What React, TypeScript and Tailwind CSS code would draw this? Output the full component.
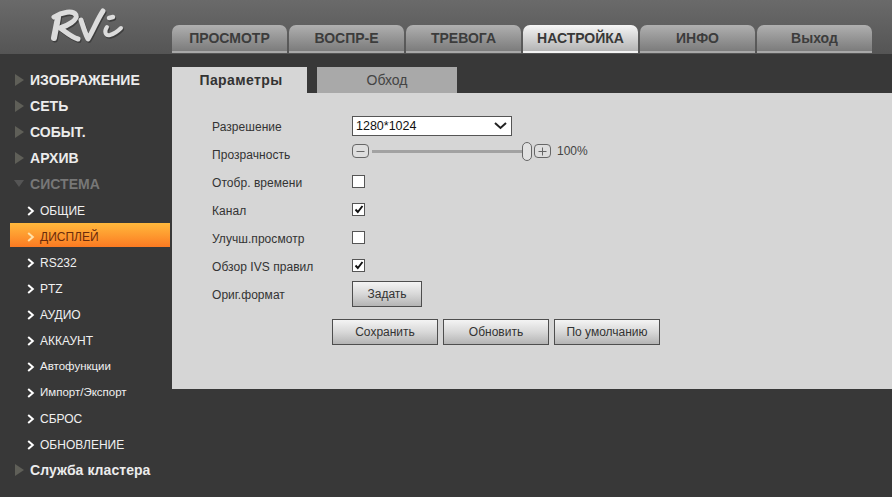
import React from "react";

const tabs = [
  { t: "ПРОСМОТР", w: "w-[115px]" },
  { t: "ВОСПР-Е", w: "w-[115px]" },
  { t: "ТРЕВОГА", w: "w-[115px]" },
  { t: "НАСТРОЙКА", w: "w-[115px]", active: true },
  { t: "ИНФО", w: "w-[115px]" },
  { t: "Выход", w: "w-[115px]" },
];

function Tri({ down = false }: { down?: boolean }) {
  return (
    <svg width="12" height="14" viewBox="0 0 12 14" className="mr-[4px] shrink-0">
      {down ? <path d="M0 3h10L5 10z" fill="#555" /> : <path d="M1 1l9 6-9 6z" fill="#5f5f58" />}
    </svg>
  );
}

function Chev({ color = "#fff" }: { color?: string }) {
  return (
    <svg width="8" height="10" viewBox="0 0 8 10" className="mr-[5px] shrink-0">
      <path d="M1.2 1l4.6 4-4.6 4" fill="none" stroke={color} strokeWidth="2" />
    </svg>
  );
}

function Section({ t, muted = false, down = false }: { t: string; muted?: boolean; down?: boolean }) {
  return (
    <div className={`flex h-[26px] items-center pl-[14px] text-[14px] font-bold tracking-[0.05px] ${muted ? "text-[#777]" : "text-[#ececec]"}`}>
      <Tri down={down} />
      {t}
    </div>
  );
}

function Sub({ t, active = false, small = false }: { t: string; active?: boolean; small?: boolean }) {
  return (
    <div className="h-[26px]">
      <div
        className={`ml-[10px] flex h-[24px] w-[160px] items-center pl-[17px] pt-[4px] ${small ? "text-[11.5px]" : "text-[12px]"} ${
          active ? "bg-gradient-to-b from-[#ffb83c] to-[#fb7a22] text-[#6b2c0c]" : "text-[#f0f0f0]"
        }`}
      >
        <Chev color={active ? "#ffe2a8" : "#fff"} />
        {t}
      </div>
    </div>
  );
}

function Row({ label, children }: { label: string; children: React.ReactNode }) {
  return (
    <div className="flex h-[28px] items-center">
      <div className="w-[140px] text-[12px] tracking-[0.05px] text-[#333]">{label}</div>
      {children}
    </div>
  );
}

function Check({ on = false }: { on?: boolean }) {
  return (
    <div className="-mt-[3px] flex h-[13px] w-[13px] items-center justify-center border border-[#555] bg-white">
      {on && (
        <svg width="10" height="9" viewBox="0 0 10 9">
          <path d="M1.5 4.5L3.8 7 8.5 1" fill="none" stroke="#111" strokeWidth="1.9" />
        </svg>
      )}
    </div>
  );
}

function Btn({ t, w }: { t: string; w: string }) {
  return (
    <div
      className={`flex h-[26px] ${w} items-center justify-center border border-[#4e4e4e] bg-gradient-to-b from-[#f4f4f4] via-[#d8d8d8] to-[#b4b4b4] text-[12px] text-[#333]`}
    >
      {t}
    </div>
  );
}

function RoundBtn({ plus = false }: { plus?: boolean }) {
  return (
    <div className="flex h-[14px] w-[17px] items-center justify-center rounded-[4px] border border-[#666] bg-[#dedede]">
      <svg width="9" height="9" viewBox="0 0 9 9">
        <path d={plus ? "M0.5 4.5h8M4.5 0.5v8" : "M0.5 4.5h8"} stroke="#666" strokeWidth="1" />
      </svg>
    </div>
  );
}

function LogoStrokes({ color }: { color: string }) {
  return (
    <g fill="none" stroke={color} strokeLinecap="round" strokeLinejoin="round">
      <path d="M8 9C7 16 5 24 4 30" strokeWidth="6" />
      <path d="M4 9C12 4 23 2 26 7C28 12 17 18 10 20C16 24 21 29 28 31" strokeWidth="5" />
      <path d="M31 12C33 18 35 25 38 31C43 23 47 12 53 3" strokeWidth="5" />
      <path d="M57 19C54 23 55 28 60 27C64 26 68 23 71 20" strokeWidth="4" />
      <path d="M59 10L63 9" strokeWidth="4.5" />
    </g>
  );
}

function Logo() {
  return (
    <svg width="76" height="42" viewBox="0 0 76 42" className="ml-[50px] mt-[8px] shrink-0">
      <g transform="translate(1 1.5)">
        <LogoStrokes color="#3e3e3e" />
      </g>
      <LogoStrokes color="#dcdcdc" />
    </svg>
  );
}

export default function App() {
  return (
    <div className="h-[497px] w-[892px] overflow-hidden bg-[#383838] font-['Liberation_Sans',Arial,sans-serif]">
      <header className="flex h-[54px] bg-gradient-to-b from-[#6a6a6a] to-[#555555]">
        <div className="w-[172px] shrink-0">
          <Logo />
        </div>
        <nav className="mt-[25px] flex h-[29px] gap-[2px] self-start">
          {tabs.map((x) => (
            <div
              key={x.t}
              className={`flex h-[28px] ${x.w} items-center justify-center rounded-t-[7px] border-b-2 text-[14px] font-bold ${
                x.active
                  ? "border-[#f2f2f2] bg-gradient-to-b from-[#f6f6f6] to-[#b4b4b4] text-[#383838]"
                  : "border-[#a8a8a8] bg-gradient-to-b from-[#b0b0b0] to-[#7c7c7c] text-[#3c3c3c]"
              }`}
            >
              {x.t}
            </div>
          ))}
        </nav>
      </header>
      <div className="flex">
        <aside className="w-[172px] shrink-0 pt-[13px]">
          <Section t="ИЗОБРАЖЕНИЕ" />
          <Section t="СЕТЬ" />
          <Section t="СОБЫТ." />
          <Section t="АРХИВ" />
          <Section t="СИСТЕМА" muted down />
          <Sub t="ОБЩИЕ" />
          <Sub t="ДИСПЛЕЙ" active />
          <Sub t="RS232" />
          <Sub t="PTZ" />
          <Sub t="АУДИО" />
          <Sub t="АККАУНТ" />
          <Sub t="Автофункции" small />
          <Sub t="Импорт/Экспорт" small />
          <Sub t="СБРОС" />
          <Sub t="ОБНОВЛЕНИЕ" />
          <Section t="Служба кластера" />
        </aside>
        <main className="flex-1 pt-[13px]">
          <div className="flex h-[26px]">
            <div className="flex w-[135px] items-center justify-center bg-[#d6d6d6] pl-[3px] text-[14px] font-bold tracking-[0.4px] text-[#333]">
              Параметры
            </div>
            <div className="ml-[10px] flex w-[140px] items-center justify-center bg-[#a9a9a9] text-[14px] text-[#444]">
              Обход
            </div>
          </div>
          <div className="h-[296px] bg-[#d6d6d6] pl-[40px] pt-[20px]">
            <Row label="Разрешение">
              <div className="-mt-[2px] flex h-[20px] w-[160px] items-center justify-between border border-[#555] bg-white pl-[3px] pr-[4px] text-[12.5px] text-[#111]">
                1280*1024
                <svg width="13" height="8" viewBox="0 0 13 8">
                  <path d="M1 1l5.5 5L12 1" fill="none" stroke="#222" strokeWidth="2" />
                </svg>
              </div>
            </Row>
            <Row label="Прозрачность">
              <div className="-mt-[8px] flex items-center">
                <RoundBtn />
                <div className="ml-[3px] h-[3px] w-[150px] bg-[#a2a2a2]" />
                <div className="h-[19px] w-[10px] rounded-[5px] border border-[#666] bg-[#e2e2e2]" />
                <div className="ml-[2px]">
                  <RoundBtn plus />
                </div>
                <span className="ml-[6px] text-[12px] text-[#444]">100%</span>
              </div>
            </Row>
            <Row label="Отобр. времени"><Check /></Row>
            <Row label="Канал"><Check on /></Row>
            <Row label="Улучш.просмотр"><Check /></Row>
            <Row label="Обзор IVS правил"><Check on /></Row>
            <Row label="Ориг.формат">
              <div className="-mt-[2px]">
                <Btn t="Задать" w="w-[70px]" />
              </div>
            </Row>
            <div className="ml-[120px] mt-[10px] flex gap-[5px]">
              <Btn t="Сохранить" w="w-[106px]" />
              <Btn t="Обновить" w="w-[106px]" />
              <Btn t="По умолчанию" w="w-[106px]" />
            </div>
          </div>
        </main>
      </div>
    </div>
  );
}
